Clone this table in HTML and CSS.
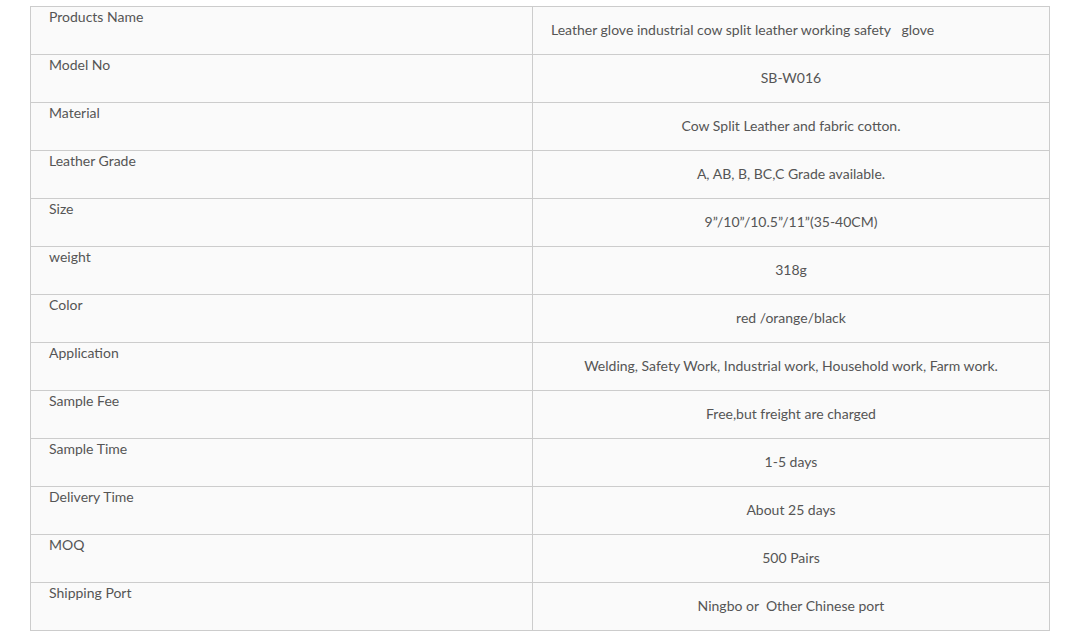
FILE: index.html
```html
<!DOCTYPE html>
<html>
<head>
<meta charset="utf-8">
<link rel="stylesheet" href="styles.css">
</head>
<body>
<table class="spec">
  <colgroup><col class="ck"><col class="cv"></colgroup>
  <tr><td class="k">Products Name</td><td class="v left">Leather glove industrial cow split leather working safety &nbsp; glove</td></tr>
  <tr><td class="k">Model No</td><td class="v">SB-W016</td></tr>
  <tr><td class="k">Material</td><td class="v">Cow Split Leather and fabric cotton.</td></tr>
  <tr><td class="k">Leather Grade</td><td class="v">A, AB, B, BC,C Grade available.</td></tr>
  <tr><td class="k">Size</td><td class="v">9”/10”/10.5”/11”(35-40CM)</td></tr>
  <tr><td class="k">weight</td><td class="v">318g</td></tr>
  <tr><td class="k">Color</td><td class="v">red /orange/black</td></tr>
  <tr><td class="k">Application</td><td class="v">Welding, Safety Work, Industrial work, Household work, Farm work.</td></tr>
  <tr><td class="k">Sample Fee</td><td class="v">Free,but freight are charged</td></tr>
  <tr><td class="k">Sample Time</td><td class="v">1-5 days</td></tr>
  <tr><td class="k">Delivery Time</td><td class="v">About 25 days</td></tr>
  <tr><td class="k">MOQ</td><td class="v">500 Pairs</td></tr>
  <tr><td class="k">Shipping Port</td><td class="v">Ningbo or &nbsp;Other Chinese port</td></tr>
</table>
</body>
</html>
```

FILE: styles.css
```css
html, body {
  margin: 0;
  padding: 0;
  background: #fff;
}
body {
  padding: 6px 31px 0 30px;
  font-family: Lato, "Liberation Sans", sans-serif;
  font-size: 14px;
  color: #555;
}
.spec {
  width: 1019px;
  table-layout: fixed;
  border-collapse: collapse;
  background: #fafafa;
}
.ck { width: 502px; }
.cv { width: 517px; }
.spec tr {
  height: 48px;
}
.spec td {
  border: 1px solid #ccc;
  padding: 0;
  line-height: 20px;
}
.spec .k {
  vertical-align: top;
  padding: 0 10px 0 18px;
}
.spec .v {
  text-align: center;
  vertical-align: middle;
  padding: 0 10px 2px;
}
.spec .v.left {
  text-align: left;
  padding-left: 18px;
}
```
